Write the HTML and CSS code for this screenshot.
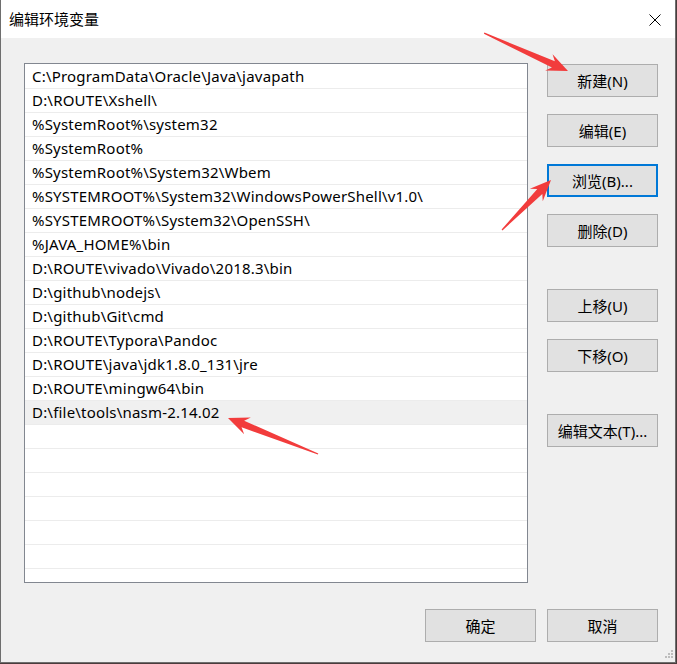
FILE: index.html
```html
<!DOCTYPE html>
<html lang="zh-CN">
<head>
<meta charset="utf-8">
<title>编辑环境变量</title>
<link rel="stylesheet" href="styles.css">
</head>
<body>
<div class="window">
  <div class="titlebar">
    <span class="title">编辑环境变量</span>
    <svg class="close" width="12" height="12" viewBox="0 0 12 12"><path d="M0.5 0.5 L11.5 11.5 M11.5 0.5 L0.5 11.5" stroke="#000" stroke-width="1" fill="none"/></svg>
  </div>
  <div class="content">
    <div class="main">
      <div class="list">
        <div class="row">C:\ProgramData\Oracle\Java\javapath</div>
        <div class="row">D:\ROUTE\Xshell\</div>
        <div class="row">%SystemRoot%\system32</div>
        <div class="row">%SystemRoot%</div>
        <div class="row">%SystemRoot%\System32\Wbem</div>
        <div class="row">%SYSTEMROOT%\System32\WindowsPowerShell\v1.0\</div>
        <div class="row">%SYSTEMROOT%\System32\OpenSSH\</div>
        <div class="row">%JAVA_HOME%\bin</div>
        <div class="row">D:\ROUTE\vivado\Vivado\2018.3\bin</div>
        <div class="row">D:\github\nodejs\</div>
        <div class="row">D:\github\Git\cmd</div>
        <div class="row">D:\ROUTE\Typora\Pandoc</div>
        <div class="row">D:\ROUTE\java\jdk1.8.0_131\jre</div>
        <div class="row">D:\ROUTE\mingw64\bin</div>
        <div class="row selected">D:\file\tools\nasm-2.14.02</div>
        <div class="row"></div>
        <div class="row"></div>
        <div class="row"></div>
        <div class="row"></div>
        <div class="row"></div>
        <div class="row"></div>
        <div class="row"></div>
      </div>
      <div class="side">
        <button class="btn">新建(N)</button>
        <button class="btn">编辑(E)</button>
        <button class="btn focused">浏览(B)...</button>
        <button class="btn">删除(D)</button>
        <button class="btn spaced">上移(U)</button>
        <button class="btn">下移(O)</button>
        <button class="btn spaced">编辑文本(T)...</button>
      </div>
    </div>
    <div class="footer">
      <button class="btn">确定</button>
      <button class="btn">取消</button>
    </div>
  </div>
  <svg class="grip" width="12" height="12" viewBox="0 0 12 12">
    <rect x="9" y="0" width="2" height="2" fill="#bdbdbd"/>
    <rect x="6" y="3" width="2" height="2" fill="#bdbdbd"/>
    <rect x="9" y="3" width="2" height="2" fill="#bdbdbd"/>
    <rect x="3" y="6" width="2" height="2" fill="#bdbdbd"/>
    <rect x="6" y="6" width="2" height="2" fill="#bdbdbd"/>
    <rect x="9" y="6" width="2" height="2" fill="#bdbdbd"/>
  </svg>
  <svg class="arrows" width="677" height="664" viewBox="0 0 677 664">
    <polygon transform="translate(568,71) rotate(24.3)" points="0,0 -21,-9 -16,-3.5 -92,-0.6 -92,0.6 -16,3.5 -21,9" fill="#f23c3c"/>
    <polygon transform="translate(551,180) rotate(-45.6)" points="0,0 -21,-9 -16,-3.5 -70,-0.6 -70,0.6 -16,3.5 -21,9" fill="#f23c3c"/>
    <polygon transform="translate(228,418) rotate(-158.2)" points="0,0 -21,-9 -16,-3.5 -97,-0.6 -97,0.6 -16,3.5 -21,9" fill="#f23c3c"/>
  </svg>
</div>
</body>
</html>
```
FILE: styles.css
```css
* { box-sizing: border-box; }
html, body { margin: 0; padding: 0; }
body {
  background: #4a3c3c;
  width: 677px;
  height: 664px;
  overflow: hidden;
  font-family: "Noto Sans", "Noto Sans CJK SC", sans-serif;
  font-size: 15px;
  color: #000;
}
.window {
  position: relative;
  width: 676px;
  height: 663px;
  background: #f0f0f0;
  border-left: 1px solid #6e6e6e;
  border-right: 1px solid #6e6e6e;
  border-bottom: 1px solid #6e6e6e;
  display: flex;
  flex-direction: column;
}
.titlebar {
  height: 38px;
  background: #fff;
  display: flex;
  align-items: center;
  justify-content: space-between;
  padding: 0 14px 0 8px;
  flex: none;
}
.title {
  font-family: "Noto Sans CJK SC", sans-serif;
  font-size: 15px;
  line-height: 20px;
}
.close { display: block; margin-top: 1px; }
.content {
  flex: 1;
  padding: 25px 17px 0 23px;
  display: flex;
  flex-direction: column;
}
.main {
  display: flex;
  gap: 19px;
}
.list {
  width: 504px;
  height: 520px;
  background: #fff;
  border: 1px solid #828790;
  overflow: hidden;
}
.row {
  height: 24px;
  border-top: 1px solid #ececec;
  padding-left: 7px;
  line-height: 22px;
  letter-spacing: 0.2px;
  white-space: nowrap;
}
.row:first-child { border-top-color: #fff; }
.row.selected { background: #f0f0f0; }
.side {
  display: flex;
  flex-direction: column;
  gap: 17px;
  padding-top: 1px;
}
.btn {
  width: 111px;
  height: 33px;
  margin: 0;
  padding: 0;
  background: #e1e1e1;
  border: 1px solid #adadad;
  font-family: "Noto Sans", "Noto Sans CJK SC", sans-serif;
  font-size: 15px;
  color: #000;
  line-height: 20px;
}
.btn.focused { border: 2px solid #0078d7; }
.btn.spaced { margin-top: 25px; }
.footer {
  display: flex;
  justify-content: flex-end;
  gap: 11px;
  margin-top: 26px;
}
.grip {
  position: absolute;
  right: 1px;
  bottom: 0px;
}
.arrows {
  position: absolute;
  left: -1px;
  top: 0;
  pointer-events: none;
}
```
